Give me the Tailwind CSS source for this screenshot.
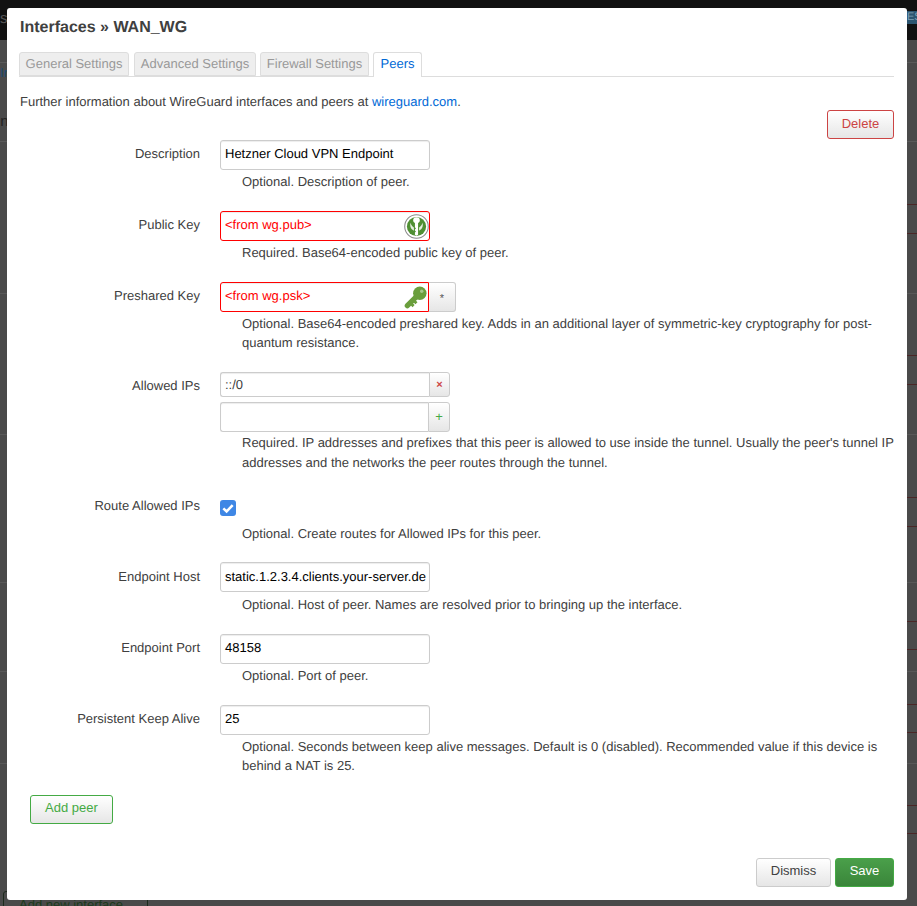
<!DOCTYPE html>
<html lang="en">
<head>
  <meta charset="UTF-8" />
  <title>Interfaces » WAN_WG</title>
  <script src="https://cdn.jsdelivr.net/npm/@tailwindcss/browser@4"></script>
</head>
<body class="relative h-[906px] w-[917px] overflow-hidden bg-[#4a4a4a] font-['Liberation_Sans',Arial,sans-serif] text-[13px] leading-[19.5px] text-[#404040] [text-rendering:geometricPrecision]">
  <!-- page behind the dialog, dimmed by the backdrop -->
  <div class="h-[40px] bg-[#111]"></div>
  <div class="absolute right-0 top-[11px] h-[13px] w-[10px] overflow-hidden bg-[#2d5570] text-[11px] leading-[13px] text-[#7fa0b5]">ES</div>
  <div class="absolute left-0 top-[11px] w-[7px] overflow-hidden text-[15px] leading-[15px] text-[#555]">s</div>
  <div class="absolute left-0 top-[62px] h-[1px] w-full bg-[#5a5a5a]"></div>
  <div class="absolute left-0 top-[64px] w-[7px] overflow-hidden text-[13px] leading-[18px] text-[#1c4a72]">Ir</div>
  <div class="absolute left-[-4px] top-[113px] w-[11px] overflow-hidden text-[15px] leading-[18px] text-[#222]">In</div>
  <div class="absolute left-0 top-[141px] h-[1px] w-full bg-[#5a5a5a]"></div>

  <div class="absolute left-0 top-[293px] h-[1px] w-full bg-[#585858]"></div>
  <div class="absolute left-0 top-[434px] h-[1px] w-full bg-[#585858]"></div>
  <div class="absolute left-0 top-[582px] h-[1px] w-full bg-[#585858]"></div>
  <div class="absolute left-0 top-[671px] h-[1px] w-full bg-[#585858]"></div>
  <div class="absolute left-0 top-[763px] h-[1px] w-full bg-[#585858]"></div>

  <div class="absolute right-0 top-[204px] h-[1px] w-[10px] bg-[#4a2626]"></div>
  <div class="absolute right-0 top-[233px] h-[1px] w-[10px] bg-[#4a2626]"></div>
  <div class="absolute right-0 top-[355px] h-[1px] w-[10px] bg-[#4a2626]"></div>
  <div class="absolute right-0 top-[384px] h-[1px] w-[10px] bg-[#4a2626]"></div>
  <div class="absolute right-0 top-[497px] h-[1px] w-[10px] bg-[#4a2626]"></div>
  <div class="absolute right-0 top-[526px] h-[1px] w-[10px] bg-[#4a2626]"></div>
  <div class="absolute right-0 top-[621px] h-[1px] w-[10px] bg-[#4a2626]"></div>
  <div class="absolute right-0 top-[649px] h-[1px] w-[10px] bg-[#4a2626]"></div>
  <div class="absolute right-0 top-[704px] h-[1px] w-[10px] bg-[#4a2626]"></div>
  <div class="absolute right-0 top-[732px] h-[1px] w-[10px] bg-[#4a2626]"></div>
  <div class="absolute right-0 top-[805px] h-[1px] w-[10px] bg-[#4a2626]"></div>
  <div class="absolute right-0 top-[833px] h-[1px] w-[10px] bg-[#4a2626]"></div>

  <div class="absolute left-[3px] top-[891px] h-[30px] w-[145px] rounded-[3px] border border-[#1c2a1c] pl-[15px] pt-[3px] text-[#1c3a1c]">Add new interface</div>

  <div class="absolute left-[7px] top-[8px] flex h-[892px] w-[900px] flex-col rounded-[3px] bg-white px-[13px] pb-[13px]">
    <h4 class="mt-[8px] text-[16px] leading-[24px] font-bold text-[#404040]">Interfaces » WAN_WG</h4>

    <div class="-ml-[1px] mt-[12px] flex h-[25px] gap-[4px] border-b border-[#ddd]">
      <div class="mr-[1px] h-[24px] w-[110px] rounded-t-[3px] border border-[#ddd] bg-[#eee] text-center leading-[22px] whitespace-nowrap text-[#999]">General Settings</div>
      <div class="h-[24px] w-[122px] rounded-t-[3px] border border-[#ddd] bg-[#eee] text-center leading-[22px] whitespace-nowrap text-[#999]">Advanced Settings</div>
      <div class="h-[24px] w-[109px] rounded-t-[3px] border border-[#ddd] bg-[#eee] text-center leading-[22px] whitespace-nowrap text-[#999]">Firewall Settings</div>
      <div class="h-[25px] w-[49px] rounded-t-[3px] border border-b-0 border-[#ddd] bg-white text-center leading-[22px] text-[#0069d6]">Peers</div>
    </div>

    <p class="mt-[15px] leading-[19px]">Further information about WireGuard interfaces and peers at <a class="text-[#0069d6]">wireguard.com</a>.</p>

    <div class="-mt-[1px] flex justify-end">
      <button class="h-[29px] w-[67px] rounded-[3px] border border-[#c44] bg-gradient-to-b from-white to-[#e6e6e6] pb-[1px] text-[#c44]">Delete</button>
    </div>

    <!-- peer fields -->
    <div class="mt-[1px] flex h-[30px] items-center">
      <label class="mb-[2px] w-[180px] text-right">Description</label>
      <div class="ml-[20px] flex h-[30px] w-[210px] items-center rounded-[3px] border border-[#ccc] px-[4px] pb-[2px] text-black shadow-[inset_0_1px_1px_rgba(0,0,0,0.075)]">Hetzner Cloud VPN Endpoint</div>
    </div>
    <p class="ml-[222px] mt-[2px] h-[39px]">Optional. Description of peer.</p>

    <div class="flex h-[30px] items-center">
      <label class="mb-[2px] w-[180px] text-right">Public Key</label>
      <div class="relative ml-[20px] flex h-[30px] w-[210px] items-center rounded-[3px] border border-[#f00] px-[4px] pb-[2px] text-[#f00] shadow-[inset_0_1px_1px_rgba(0,0,0,0.075)]">
        &lt;from wg.pub&gt;
        <svg class="absolute right-[0px] top-[2px]" width="25" height="25" viewBox="0 0 24 24">
          <circle cx="12" cy="12" r="11.3" fill="#fff" stroke="#8a8a8a" stroke-width="1"/>
          <circle cx="12" cy="12" r="9.2" fill="#4f8f33"/>
          <path d="M12 3.200c2 0 3.200 1.200 3.200 2.800 0 1.200-.7 2.100-1.700 2.600v11.200l-1.500 1-1.500-1v-2l1-1-1-1v-1l1-1-1-1V8.600C9.500 8.100 8.800 7.200 8.800 6c0-1.600 1.200-2.800 3.200-2.800z" fill="#fff"/>
          <path d="M6.200 8.500c.8 2.500 2 3.800 3.300 4.500v3c-2.500-1-4.200-3.500-3.300-7.500zM17.800 8.500c-.8 2.500-2 3.800-3.300 4.500v3c2.500-1 4.200-3.500 3.300-7.500z" fill="#fff" opacity=".85"/>
        </svg>
      </div>
    </div>
    <p class="ml-[222px] mt-[2px] h-[39px]">Required. Base64-encoded public key of peer.</p>

    <div class="flex h-[30px] items-center">
      <label class="mb-[2px] w-[180px] text-right">Preshared Key</label>
      <div class="relative ml-[20px] flex h-[30px] w-[209px] items-center rounded-l-[3px] border border-[#f00] px-[4px] pb-[2px] text-[#f00] shadow-[inset_0_1px_1px_rgba(0,0,0,0.075)]">
        &lt;from wg.psk&gt;
        <svg class="absolute right-[1px] top-[3px]" width="23" height="23" viewBox="0 0 24 24">
          <circle cx="16.500" cy="7.500" r="7" fill="#6a9e3c"/>
          <path d="M13 11L3.500 20.500" stroke="#6a9e3c" stroke-width="5.500" stroke-linecap="round"/>
          <path d="M7 18l3 3M10 15l3 3" stroke="#6a9e3c" stroke-width="3"/>
          <circle cx="18.500" cy="5.500" r="1.800" fill="#a5c88a"/>
        </svg>
      </div>
      <button class="h-[30px] w-[27px] rounded-r-[3px] border border-l-0 border-[#ccc] bg-gradient-to-b from-white to-[#e6e6e6] pt-[3px] text-[11px] text-[#555]">*</button>
    </div>
    <p class="ml-[222px] mt-[2px] h-[58px] w-[650px] leading-[19px]">Optional. Base64-encoded preshared key. Adds in an additional layer of symmetric-key cryptography for post-quantum resistance.</p>

    <div class="flex">
      <label class="mt-[4px] w-[180px] text-right">Allowed IPs</label>
      <div class="ml-[20px] flex flex-col gap-[5px]">
        <div class="flex h-[25px] w-[230px]">
          <div class="flex flex-1 items-center rounded-l-[3px] border border-r-0 border-[#ccc] px-[4px] text-[#404040] shadow-[inset_0_1px_1px_rgba(0,0,0,0.075)]">::/0</div>
          <button class="w-[21px] rounded-r-[3px] border border-[#ccc] bg-gradient-to-b from-white to-[#e6e6e6] text-[11px] font-bold text-[#c44]">×</button>
        </div>
        <div class="flex h-[30px] w-[230px]">
          <div class="flex-1 rounded-l-[3px] border border-r-0 border-[#ccc] shadow-[inset_0_1px_1px_rgba(0,0,0,0.075)]"></div>
          <button class="w-[22px] rounded-r-[3px] border border-[#ccc] bg-gradient-to-b from-white to-[#e6e6e6] text-[13px] text-[#4a4]">+</button>
        </div>
      </div>
    </div>
    <p class="ml-[222px] mt-[1px] h-[65px] w-[655px]">Required. IP addresses and prefixes that this peer is allowed to use inside the tunnel. Usually the peer's tunnel IP addresses and the networks the peer routes through the tunnel.</p>

    <div class="flex h-[19px] items-center">
      <label class="mb-[4px] w-[180px] text-right">Route Allowed IPs</label>
      <span class="ml-[20px] flex h-[16px] w-[16px] items-center justify-center rounded-[3px] bg-[#3f87e5]">
        <svg width="14" height="14" viewBox="0 0 12 12"><path d="M2 6.300l2.800 2.700L10 3.500" fill="none" stroke="#fff" stroke-width="2.200"/></svg>
      </span>
    </div>
    <p class="ml-[222px] mt-[7px] h-[38px]">Optional. Create routes for Allowed IPs for this peer.</p>

    <div class="flex h-[30px] items-center">
      <label class="w-[180px] text-right">Endpoint Host</label>
      <div class="ml-[20px] flex h-[30px] w-[210px] items-center overflow-hidden whitespace-nowrap rounded-[3px] border border-[#ccc] px-[4px] text-black shadow-[inset_0_1px_1px_rgba(0,0,0,0.075)]">static.1.2.3.4.clients.your-server.de</div>
    </div>
    <p class="ml-[222px] mt-[3px] h-[39px]">Optional. Host of peer. Names are resolved prior to bringing up the interface.</p>

    <div class="flex h-[30px] items-center">
      <label class="mb-[2px] w-[180px] text-right">Endpoint Port</label>
      <div class="ml-[20px] flex h-[30px] w-[210px] items-center rounded-[3px] border border-[#ccc] px-[4px] pb-[2px] text-black shadow-[inset_0_1px_1px_rgba(0,0,0,0.075)]">48158</div>
    </div>
    <p class="ml-[222px] mt-[2px] h-[39px]">Optional. Port of peer.</p>

    <div class="flex h-[30px] items-center">
      <label class="mb-[2px] w-[180px] text-right">Persistent Keep Alive</label>
      <div class="ml-[20px] flex h-[30px] w-[210px] items-center rounded-[3px] border border-[#ccc] px-[4px] pb-[2px] text-black shadow-[inset_0_1px_1px_rgba(0,0,0,0.075)]">25</div>
    </div>
    <p class="ml-[222px] mt-[2px] h-[39px] w-[650px] leading-[19px]">Optional. Seconds between keep alive messages. Default is 0 (disabled). Recommended value if this device is behind a NAT is 25.</p>

    <div class="ml-[10px] mt-[19px]">
      <button class="h-[29px] w-[83px] rounded-[3px] border border-[#4a4] bg-gradient-to-b from-white to-[#e6e6e6] pb-[3px] text-[#4a4]">Add peer</button>
    </div>

    <div class="mt-auto flex justify-end gap-[4px]">
      <button class="h-[29px] w-[75px] rounded-[3px] border border-[#ccc] bg-gradient-to-b from-white to-[#e6e6e6] pb-[3px] text-[#404040]">Dismiss</button>
      <button class="h-[29px] w-[59px] rounded-[3px] border border-[#4a4] bg-gradient-to-b from-[#4a9f4a] to-[#3a863a] pb-[3px] text-white">Save</button>
    </div>
  </div>
</body>
</html>
